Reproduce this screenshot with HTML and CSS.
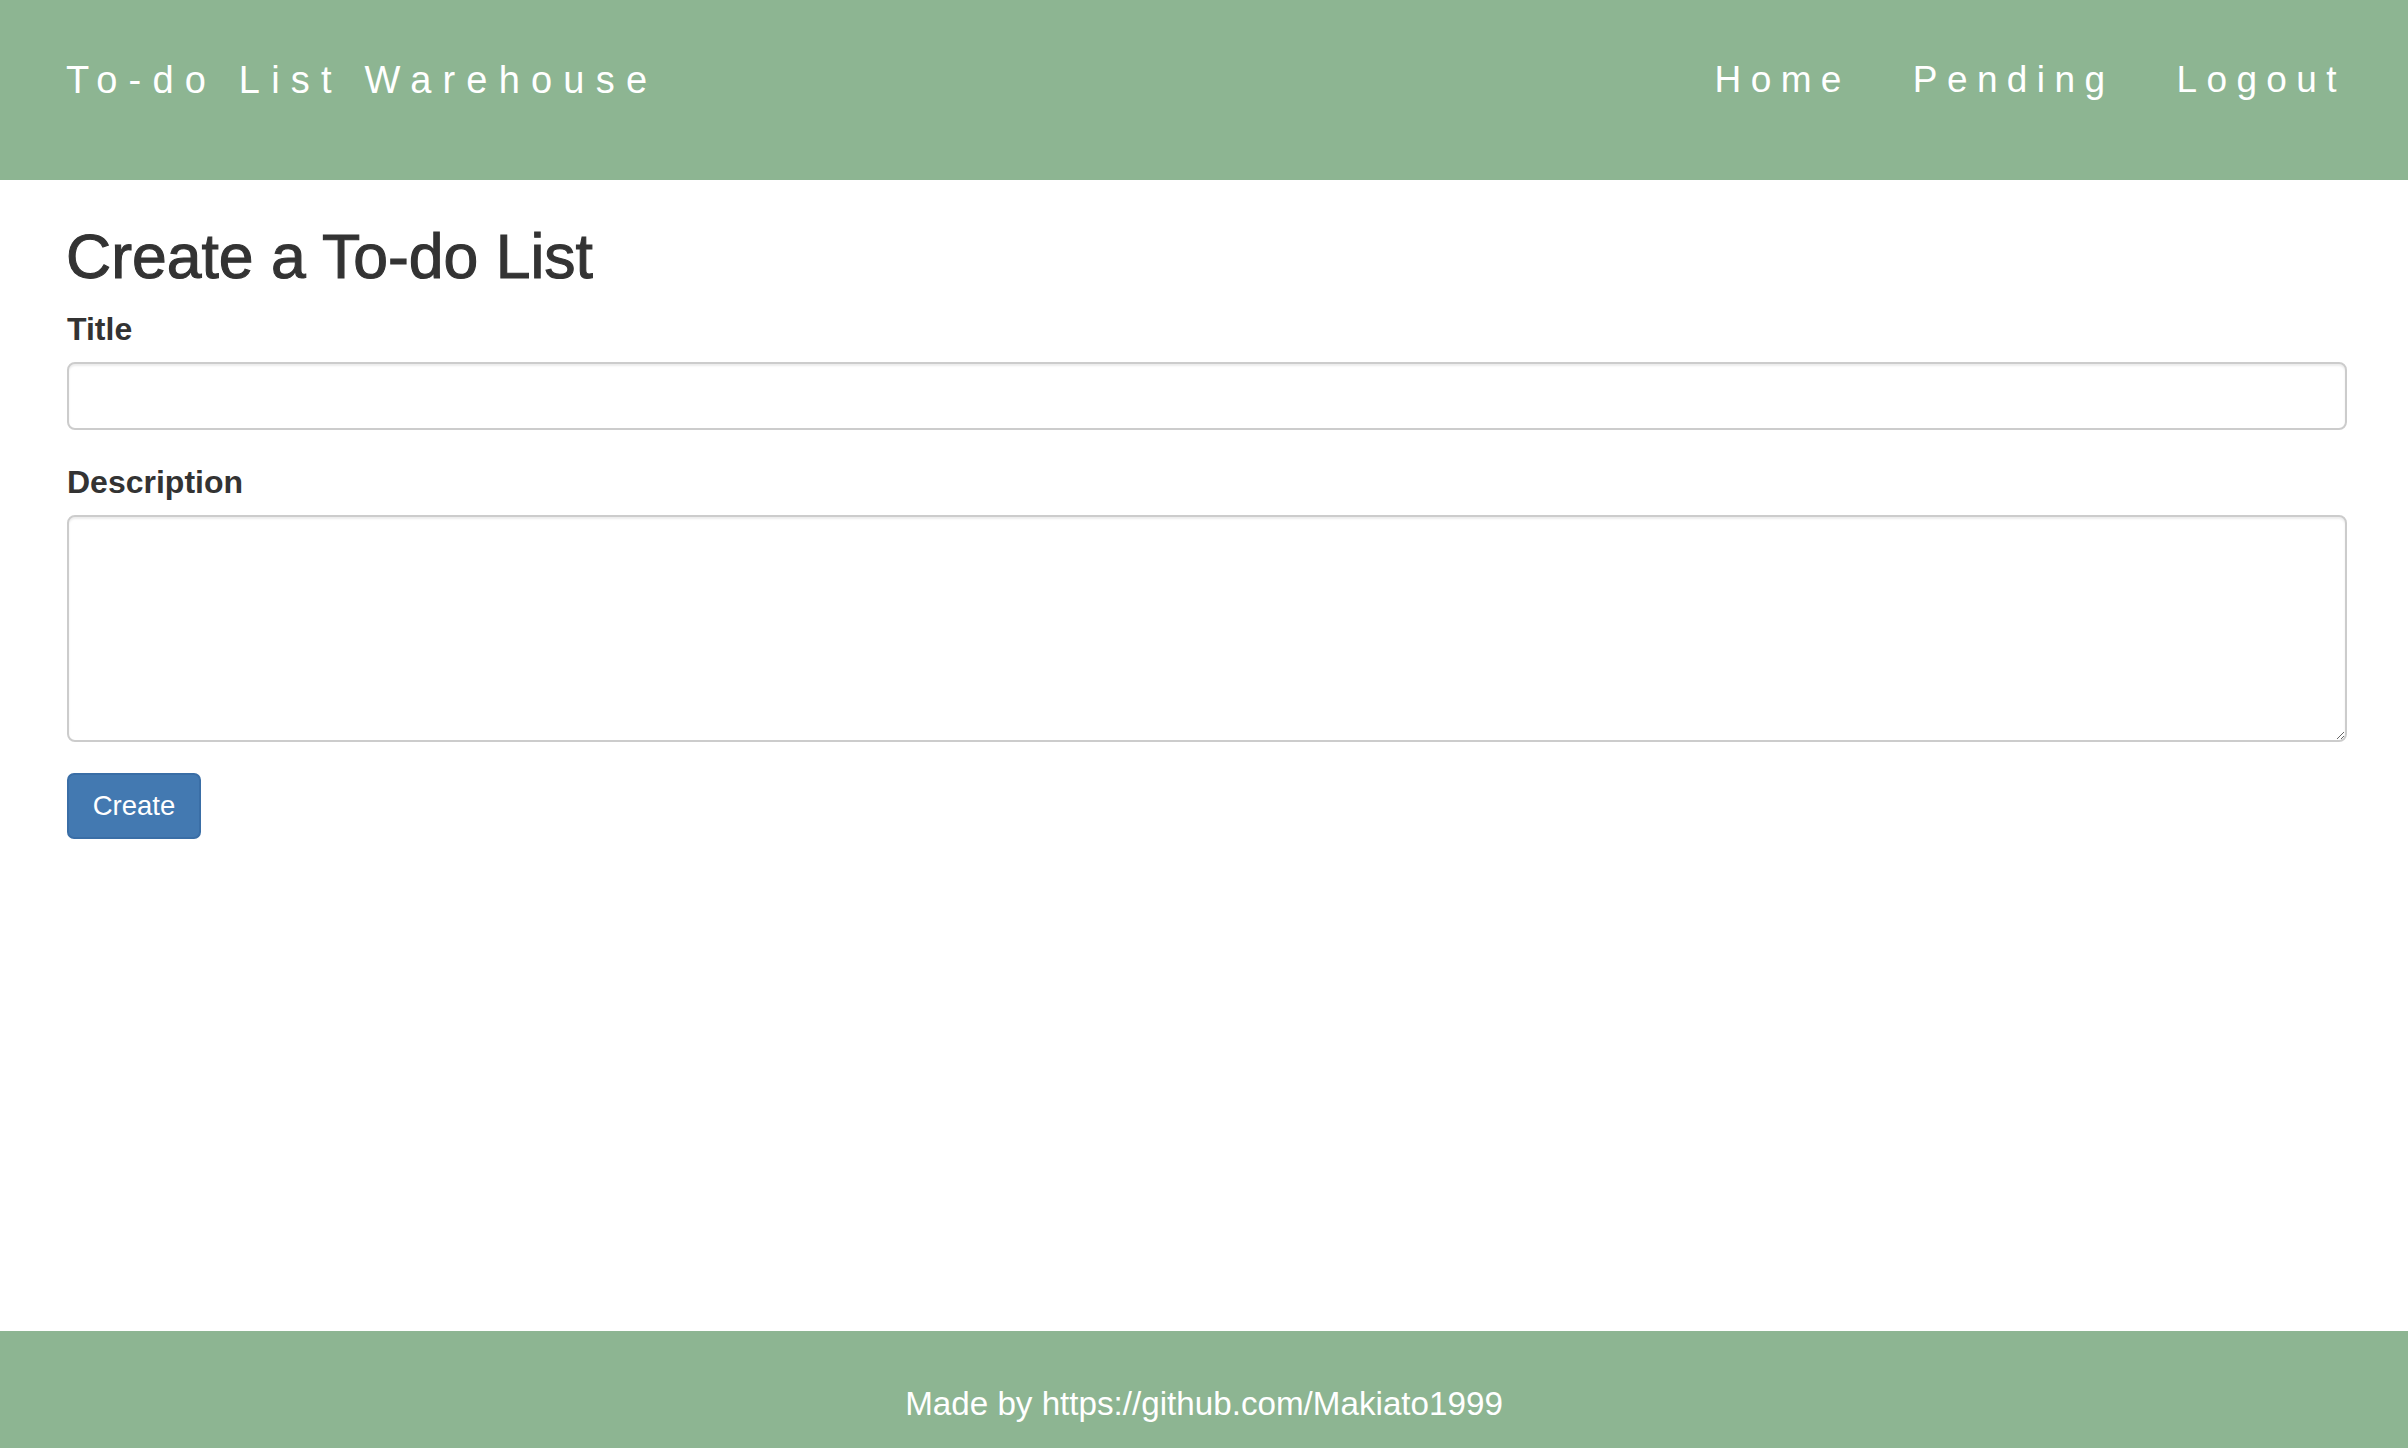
FILE: index.html
```html
<!DOCTYPE html>
<html lang="en">
<head>
<meta charset="utf-8">
<title>To-do List Warehouse</title>
<link rel="stylesheet" href="styles.css">
</head>
<body>
<header class="topbar">
  <a class="brand" href="#">To-do List Warehouse</a>
  <nav class="nav">
    <a class="nav-link" href="#">Home</a>
    <a class="nav-link" href="#">Pending</a>
    <a class="nav-link" href="#">Logout</a>
  </nav>
</header>
<main class="content">
  <h1 class="page-title">Create a To-do List</h1>
  <form class="todo-form">
    <div class="field">
      <label class="field-label" for="title">Title</label>
      <input class="field-input" id="title" type="text">
    </div>
    <div class="field">
      <label class="field-label" for="desc">Description</label>
      <textarea class="field-textarea" id="desc"></textarea>
    </div>
    <button class="btn-primary" type="button">Create</button>
  </form>
</main>
<footer class="footer">
  <p class="footer-text">Made by https://github.com/Makiato1999</p>
</footer>
</body>
</html>
```

FILE: styles.css
```css
* {
  box-sizing: border-box;
}

html, body {
  margin: 0;
  padding: 0;
}

body {
  min-height: 100vh;
  display: flex;
  flex-direction: column;
  font-family: "Liberation Sans", Arial, Helvetica, sans-serif;
  color: #333333;
  background: #ffffff;
}

.topbar {
  height: 180px;
  background: #8db592;
  display: flex;
  justify-content: space-between;
  align-items: flex-start;
  padding: 60px 62px 0 66px;
}

.brand {
  color: #ffffff;
  text-decoration: none;
  font-size: 38px;
  line-height: 40px;
  letter-spacing: 11.2px;
}

.nav {
  display: flex;
  gap: 62px;
}

.nav-link {
  color: #ffffff;
  text-decoration: none;
  font-size: 37px;
  line-height: 40px;
  letter-spacing: 9.4px;
}

.content {
  flex: 1;
  padding: 42px 62px 0 66px;
}

.page-title {
  margin: 0;
  font-size: 62.5px;
  line-height: 68px;
  font-weight: 400;
  color: #333333;
  -webkit-text-stroke: 1.1px #333333;
}

.todo-form {
  display: flex;
  flex-direction: column;
  align-items: flex-start;
  margin-top: 21px;
}

.field {
  width: 100%;
  display: flex;
  flex-direction: column;
  margin-bottom: 34px;
}

.field:last-of-type {
  margin-bottom: 31px;
}

.field-label {
  font-size: 32px;
  line-height: 36px;
  font-weight: 700;
  color: #333333;
  margin-bottom: 15px;
  padding-left: 1px;
}

.field-input,
.field-textarea {
  width: 100%;
  margin-left: 1px;
  border: 2px solid #cccccc;
  border-radius: 8px;
  background: #ffffff;
  box-shadow: inset 0 2px 2px rgba(0, 0, 0, 0.075);
  font-family: "Liberation Sans", Arial, sans-serif;
  font-size: 27px;
  color: #555555;
  padding: 10px 20px;
  outline: none;
}

.field-input {
  height: 68px;
}

.field-textarea {
  height: 227px;
  resize: vertical;
}

.btn-primary {
  margin-left: 1px;
  width: 134px;
  height: 66px;
  background: #4379b1;
  border: 2px solid #3a6ea6;
  border-radius: 7px;
  color: #ffffff;
  font-family: "Liberation Sans", Arial, sans-serif;
  font-size: 27.5px;
  padding: 0;
  cursor: pointer;
}

.footer {
  height: 117px;
  background: #8db592;
  padding-top: 53px;
}

.footer-text {
  margin: 0;
  text-align: center;
  color: #ffffff;
  font-size: 33.2px;
  line-height: 40px;
}
```
